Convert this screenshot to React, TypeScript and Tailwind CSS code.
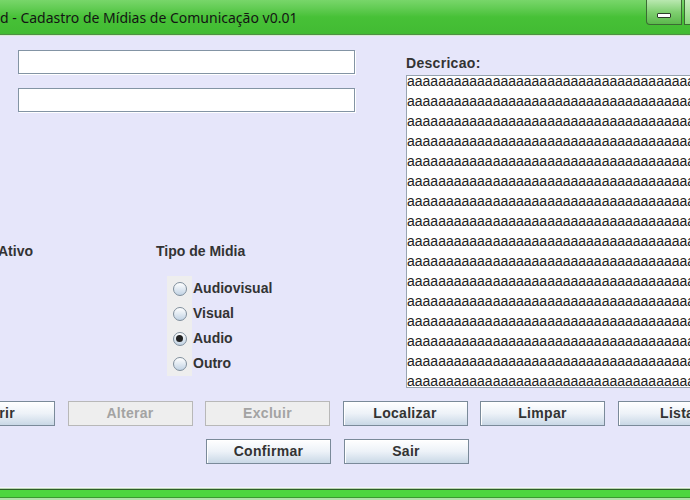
import React from 'react';

const rows = Array.from({ length: 16 }, () => 'a'.repeat(40));

const Btn: React.FC<{ label: string; disabled?: boolean }> = ({ label, disabled }) => (
  <div
    className={
      disabled
        ? 'w-[125px] h-[25px] shrink-0 flex items-center justify-center border border-[#b8b8b8] bg-[#eeeeee] text-[#a3a3a3] text-[14px] font-bold tracking-[0.3px]'
        : 'w-[125px] h-[25px] shrink-0 flex items-center justify-center border border-[#7a8a99] bg-linear-to-b from-white via-[#edf2f8] to-[#c9d8e6] shadow-[inset_1px_1px_0_#fff] text-[#333333] text-[14px] font-bold tracking-[0.3px]'
    }
  >
    {label}
  </div>
);

const Radio: React.FC<{ label: string; checked?: boolean }> = ({ label, checked }) => (
  <div className="flex items-center h-[25px]">
    <div className="w-[25px] h-[25px] shrink-0 flex items-center justify-center bg-[#eeeeee]">
      <div className="w-[14px] h-[14px] rounded-full border border-[#7f8e9c] bg-linear-to-b from-white to-[#c2d3e4] flex items-center justify-center">
        {checked && <div className="w-[7px] h-[7px] rounded-full bg-[#222222]" />}
      </div>
    </div>
    <span className="pl-[1px] text-[14px] font-bold text-[#333333]">{label}</span>
  </div>
);

export default function App() {
  return (
    <div
      className="w-[690px] h-[500px] overflow-hidden flex flex-col bg-[#e6e6fa]"
      style={{ fontFamily: '"Liberation Sans", Arial, sans-serif' }}
    >
      {/* title bar */}
      <div className="h-[34px] shrink-0 flex bg-linear-to-b from-[#78d66a] via-[#47c137] to-[#42bb33]">
        <div
          className="flex-1 flex items-center text-[14px] text-[#141414] whitespace-nowrap"
          style={{ fontFamily: '"Noto Sans", "Open Sans", sans-serif' }}
        >
          d - Cadastro de Mídias de Comunicação v0.01
        </div>
        <div className="flex gap-[2px] shrink-0 w-[44px]">
          <div className="w-[36px] h-[25px] shrink-0 rounded-bl-[4px] border border-t-0 border-[#3c6a34] bg-linear-to-b from-[#b9e8b0] via-[#7fcf70] to-[#5bb84c] flex items-center justify-center">
            <div className="w-[14px] h-[5px] bg-white border border-[#2d3d2a] rounded-[1px] mt-[6px]" />
          </div>
          <div className="w-[36px] h-[25px] shrink-0 border border-t-0 border-[#3c6a34] bg-linear-to-b from-[#c8eec0] to-[#8ad87c]" />
        </div>
      </div>
      <div className="h-[1px] bg-[#4f8f45] shrink-0" />
      <div className="h-[1px] bg-[#d6ecd2] shrink-0" />

      {/* body */}
      <div className="flex-1 flex flex-col">
        <div className="flex">
          <div className="w-[406px] shrink-0 pl-[18px] pt-[14px]">
            <div className="w-[337px] h-[24px] bg-white border border-[#8394a4] shadow-[1px_1px_0_#fff]" />
            <div className="w-[337px] h-[24px] mt-[14px] bg-white border border-[#8394a4] shadow-[1px_1px_0_#fff]" />
            <div className="flex mt-[131px] text-[14px] font-bold text-[#333333] leading-[16px]">
              <div className="w-[158px] ml-[-20px] shrink-0">Ativo</div>
              <div>Tipo de Midia</div>
            </div>
            <div className="mt-[17px] ml-[149px] flex flex-col">
              <Radio label="Audiovisual" />
              <Radio label="Visual" />
              <Radio label="Audio" checked />
              <Radio label="Outro" />
            </div>
          </div>
          <div className="shrink-0 pt-[19px]">
            <div className="text-[14px] font-bold text-[#333333] leading-[16px] tracking-[0.3px]">Descricao:</div>
            <div className="mt-[4px] w-[300px] h-[313px] bg-white border border-[#98a4b0] overflow-hidden">
              <div className="mt-[-5px] text-[14px] leading-[20px] text-[#222222] whitespace-nowrap">
                {rows.map((r, i) => (
                  <div key={i}>{r}</div>
                ))}
              </div>
            </div>
          </div>
        </div>

        <div className="flex gap-[12.5px] ml-[-70px] mt-[13px]">
          <Btn label="Inserir" />
          <Btn label="Alterar" disabled />
          <Btn label="Excluir" disabled />
          <Btn label="Localizar" />
          <Btn label="Limpar" />
          <Btn label="Listar" />
        </div>
        <div className="flex gap-[12.5px] ml-[206px] mt-[13px]">
          <Btn label="Confirmar" />
          <Btn label="Sair" />
        </div>
      </div>

      {/* bottom frame */}
      <div className="h-[1px] bg-[#f4f4fc] shrink-0" />
      <div className="h-[1px] bg-[#b8d6b2] shrink-0" />
      <div className="h-[1px] bg-[#2f5d29] shrink-0" />
      <div className="h-[7px] bg-[#4ed640] shrink-0" />
      <div className="h-[1px] bg-[#3a9a30] shrink-0" />
      <div className="h-[2px] bg-[#b2e0aa] shrink-0" />
    </div>
  );
}
